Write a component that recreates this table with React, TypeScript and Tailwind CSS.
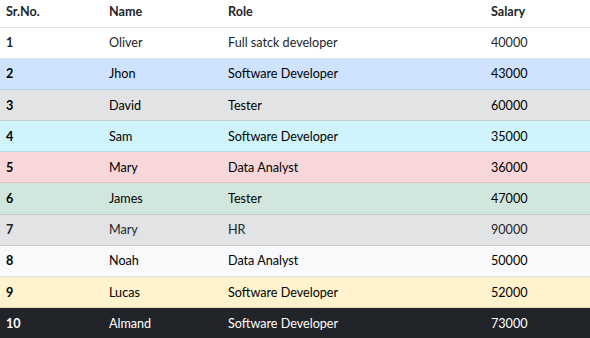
import React from 'react';

type Row = { no: number; name: string; role: string; salary: number; tone: string };

const rows: Row[] = [
    { no: 1, name: 'Oliver', role: 'Full satck developer', salary: 40000, tone: 'bg-white text-[#212529] border-[#dee2e6]' },
    { no: 2, name: 'Jhon', role: 'Software Developer', salary: 43000, tone: 'bg-[#cfe2ff] text-black border-[#bacbe6]' },
    { no: 3, name: 'David', role: 'Tester', salary: 60000, tone: 'bg-[#e2e3e5] text-black border-[#cbccce]' },
    { no: 4, name: 'Sam', role: 'Software Developer', salary: 35000, tone: 'bg-[#cff4fc] text-black border-[#badce3]' },
    { no: 5, name: 'Mary', role: 'Data Analyst', salary: 36000, tone: 'bg-[#f8d7da] text-black border-[#dfc2c4]' },
    { no: 6, name: 'James', role: 'Tester', salary: 47000, tone: 'bg-[#d1e7dd] text-black border-[#bcd0c7]' },
    { no: 7, name: 'Mary', role: 'HR', salary: 90000, tone: 'bg-[#e2e3e5] text-[#212529] border-[#cbccce]' },
    { no: 8, name: 'Noah', role: 'Data Analyst', salary: 50000, tone: 'bg-[#f8f9fa] text-black border-[#dfe0e1]' },
    { no: 9, name: 'Lucas', role: 'Software Developer', salary: 52000, tone: 'bg-[#fff3cd] text-black border-[#e6dbb9]' },
    { no: 10, name: 'Almand', role: 'Software Developer', salary: 73000, tone: 'bg-[#212529] text-white border-[#373b3e]' },
];

export default function App() {
    return (
        <div className="w-[590px] h-[338px] overflow-hidden bg-white font-['Lato','Noto_Sans',sans-serif] text-[12.6px] text-[#212529]">
            <table className="w-full table-fixed border-collapse">
                <colgroup>
                    <col className="w-[103px]" />
                    <col className="w-[119px]" />
                    <col className="w-[263px]" />
                    <col />
                </colgroup>
                <thead>
                    <tr className="h-[27px] border-b border-[#dee2e6]">
                        <th className="px-[6px] pb-[2px] text-left font-bold align-middle">Sr.No.</th>
                        <th className="px-[6px] pb-[2px] text-left font-bold align-middle">Name</th>
                        <th className="px-[6px] pb-[2px] text-left font-bold align-middle">Role</th>
                        <th className="px-[6px] pb-[2px] text-left font-bold align-middle">Salary</th>
                    </tr>
                </thead>
                <tbody>
                    {rows.map(r => (
                        <tr key={r.no} className={`h-[31.2px] border-b ${r.tone}`}>
                            <td className="px-[6px] pt-[2px] font-bold align-middle">{r.no}</td>
                            <td className="px-[6px] pt-[2px] align-middle">{r.name}</td>
                            <td className="px-[6px] pt-[2px] align-middle">{r.role}</td>
                            <td className="px-[6px] pt-[2px] align-middle">{r.salary}</td>
                        </tr>
                    ))}
                </tbody>
            </table>
        </div>
    );
}
